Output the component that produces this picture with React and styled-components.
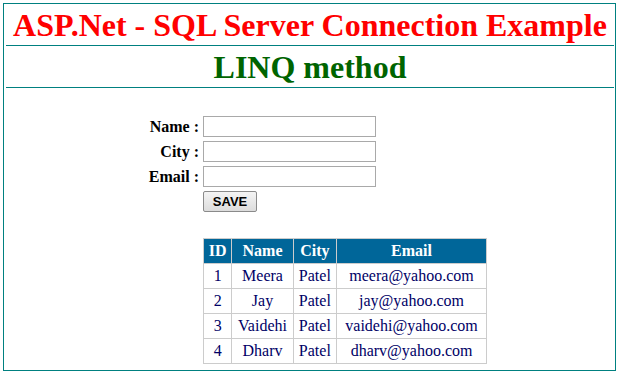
import React from "react";
import styled, { createGlobalStyle } from "styled-components";

const Global = createGlobalStyle`
  html, body { margin: 0; padding: 0; background: #ffffff; }
  body { font-family: "Liberation Serif", "Times New Roman", serif; }
`;

const Frame = styled.div`
  margin: 3px 2px 0 3px;
  width: 613px;
  box-sizing: border-box;
  border: 1px solid #008080;
  padding: 3px 1px 6px 2px;
  display: flex;
  flex-direction: column;
`;

const Heading = styled.h1`
  margin: ${(p) => (p.$first ? "0" : "3px 0 0")};
  font-family: "Liberation Serif", "Times New Roman", serif;
  font-size: 32px;
  font-weight: bold;
  line-height: 36px;
  text-align: center;
  color: ${(p) => p.$color};
  white-space: nowrap;
`;

const Rule = styled.div`
  margin-top: 2px;
  height: 1px;
  background: #008080;
`;

const Form = styled.div`
  margin-top: 28px;
  display: grid;
  grid-template-columns: 193px auto;
  column-gap: 4px;
  row-gap: 4px;
  justify-content: start;
  align-items: start;
`;

const Label = styled.label`
  font-family: "Liberation Serif", "Times New Roman", serif;
  font-size: 16px;
  font-weight: bold;
  line-height: 21px;
  text-align: right;
  color: #000000;
  white-space: nowrap;
`;

const Input = styled.input`
  width: 173px;
  height: 21px;
  box-sizing: border-box;
  border: 1px solid #a9a9a9;
  padding: 1px 3px;
  margin: 0;
  background: #ffffff;
  font-family: "Liberation Sans", Arial, sans-serif;
  font-size: 13px;
  outline: none;
`;

const Button = styled.button`
  width: 54px;
  height: 21px;
  box-sizing: border-box;
  margin: 0;
  padding: 0;
  border: 1px solid #8a8a8a;
  border-radius: 2px;
  background: linear-gradient(#f4f4f4, #dcdcdc);
  font-family: "Liberation Sans", Arial, sans-serif;
  font-size: 13px;
  font-weight: bold;
  color: #000000;
  line-height: 19px;
`;

const Empty = styled.div``;

const Grid = styled.table`
  margin-top: 22px;
  width: 284px;
  border-collapse: collapse;
  border: 1px solid #cccccc;
  font-family: "Liberation Serif", "Times New Roman", serif;
  font-size: 16px;
`;

const Th = styled.th`
  background: #006699;
  color: #ffffff;
  font-weight: bold;
  border: 1px solid #cccccc;
  padding: 0 4px;
  height: 24px;
  line-height: 24px;
  text-align: center;
  white-space: nowrap;
`;

const Td = styled.td`
  color: #000066;
  border: 1px solid #cccccc;
  padding: 0 4px;
  height: 24px;
  line-height: 24px;
  text-align: center;
  white-space: nowrap;
`;

const rows = [
  { id: 1, name: "Meera", city: "Patel", email: "meera@yahoo.com" },
  { id: 2, name: "Jay", city: "Patel", email: "jay@yahoo.com" },
  { id: 3, name: "Vaidehi", city: "Patel", email: "vaidehi@yahoo.com" },
  { id: 4, name: "Dharv", city: "Patel", email: "dharv@yahoo.com" },
];

export default function App() {
  return (
    <>
      <Global />
      <Frame>
        <Heading $first $color="#ff0000">
          ASP.Net - SQL Server Connection Example
        </Heading>
        <Rule />
        <Heading $color="#006400">LINQ method</Heading>
        <Rule />
        <Form>
          <Label>Name :</Label>
          <Input type="text" />
          <Label>City :</Label>
          <Input type="text" />
          <Label>Email :</Label>
          <Input type="text" />
          <Empty />
          <div>
            <Button type="button">SAVE</Button>
          </div>
          <Empty />
          <Grid>
            <thead>
              <tr>
                <Th>ID</Th>
                <Th>Name</Th>
                <Th>City</Th>
                <Th>Email</Th>
              </tr>
            </thead>
            <tbody>
              {rows.map((r) => (
                <tr key={r.id}>
                  <Td>{r.id}</Td>
                  <Td>{r.name}</Td>
                  <Td>{r.city}</Td>
                  <Td>{r.email}</Td>
                </tr>
              ))}
            </tbody>
          </Grid>
        </Form>
      </Frame>
    </>
  );
}
